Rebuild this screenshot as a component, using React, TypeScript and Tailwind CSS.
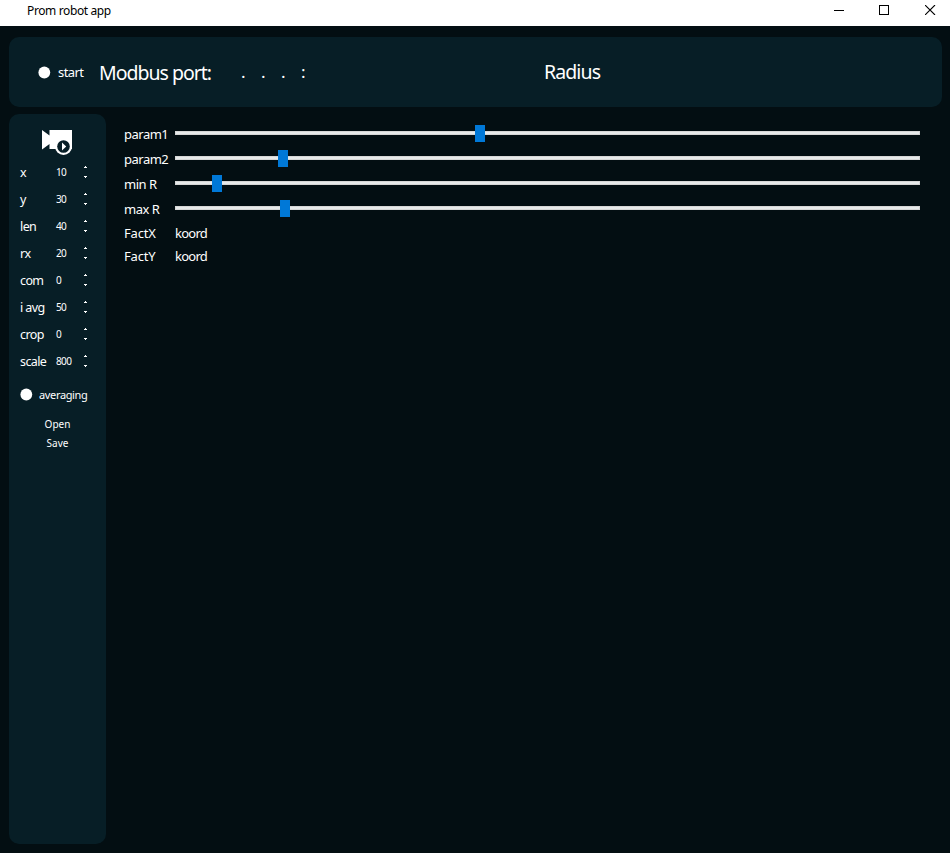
const SETTINGS = [
  { label: 'x', value: '10' },
  { label: 'y', value: '30' },
  { label: 'len', value: '40' },
  { label: 'rx', value: '20' },
  { label: 'com', value: '0' },
  { label: 'i avg', value: '50' },
  { label: 'crop', value: '0' },
  { label: 'scale', value: '800' },
];

const SLIDERS = [
  { label: 'param1', offset: 300 },
  { label: 'param2', offset: 103 },
  { label: 'min R', offset: 37 },
  { label: 'max R', offset: 105 },
];

function TitleBar() {
  return (
    <header className="flex h-[26px] items-start justify-between bg-white text-black">
      <h1 className="pl-[27px] text-[12px] leading-[22px] tracking-[-0.38px]">Prom robot app</h1>
      <div className="flex gap-[35px] pr-[14px] pt-[5px]">
        <svg width="10" height="11" shapeRendering="crispEdges" aria-label="Minimize">
          <path d="M0 5.5h10" stroke="#000" />
        </svg>
        <svg width="10" height="10" shapeRendering="crispEdges" aria-label="Maximize">
          <path d="M.5 .5h9v9h-9z" fill="none" stroke="#000" />
        </svg>
        <svg className="ml-px" width="11" height="10" aria-label="Close">
          <path d="M0 0l10 10M10 0L0 10" stroke="#000" strokeWidth="1.1" />
        </svg>
      </div>
    </header>
  );
}

function Radio({ className }: { className: string }) {
  return (
    <svg className={`shrink-0 ${className}`} width="13" height="13">
      <circle cx="6.3" cy="6.5" r="5.9" fill="#fff" />
    </svg>
  );
}

function ConnectionBar() {
  return (
    <section className="flex h-[70px] rounded-[10px] bg-[#071e26] pl-[29px]">
      <Radio className="mt-[29px]" />
      <span className="mt-[25px] ml-[7px] w-[41px] text-[13px] leading-[20px] tracking-[-0.6px]">start</span>
      <span className="mt-[21px] w-[142px] text-[19.5px] leading-[30px] tracking-[-1px] whitespace-nowrap">
        Modbus port:
      </span>
      <div className="mt-[25px] flex text-[17px] leading-[20px]">
        <span className="w-[20px]">.</span>
        <span className="w-[20px]">.</span>
        <span className="w-[20px]">.</span>
        <span className="w-[243px]">:</span>
      </div>
      <span className="mt-[20px] text-[19.5px] leading-[30px] tracking-[-0.9px]">Radius</span>
    </section>
  );
}

function CameraIcon() {
  return (
    <svg className="ml-[33px] mt-[16px]" width="31" height="26" viewBox="0 0 31 26">
      <path d="M0 0L7.5 5.5V0H30V19H7.5V14L0 19.5Z" fill="#fff" />
      <circle cx="21.5" cy="16.5" r="8.4" fill="#fff" />
      <circle cx="21.5" cy="16.5" r="6.3" fill="#071e26" />
      <path d="M20 12.5L24.2 16.5L20 20.5Z" fill="#fff" />
    </svg>
  );
}

function Stepper() {
  return (
    <svg width="3" height="12" shapeRendering="crispEdges" fill="#fff">
      <path d="M1 0h1v1h1v1h-3v-1h1zM0 10h3v1h-1v1h-1v-1h-1z" />
    </svg>
  );
}

function Sidebar() {
  return (
    <aside className="h-[730px] w-[97px] rounded-[10px] bg-[#071e26]">
      <div className="h-[45px] overflow-hidden">
        <CameraIcon />
      </div>
      {SETTINGS.map((s) => (
        <div key={s.label} className="flex h-[27px] items-start pl-[11px]">
          <span className="mt-[4px] w-[36px] text-[12.5px] leading-[20px] tracking-[-0.6px] whitespace-nowrap">{s.label}</span>
          <span className="mt-[4px] w-[28px] text-[10px] leading-[19px] tracking-[-0.6px]">{s.value}</span>
          <span className="mt-[7px] block">
            <Stepper />
          </span>
        </div>
      ))}
      <div className="mt-[9px] flex h-[26px] pl-[11px]">
        <Radio className="mt-[4px]" />
        <span className="mt-[1px] ml-[6px] text-[11px] leading-[20px] tracking-[-0.35px]">averaging</span>
      </div>
      <div className="mt-[5px] flex flex-col items-center text-[10px] leading-[19px]">
        <span>Open</span>
        <span>Save</span>
      </div>
    </aside>
  );
}

function Controls() {
  return (
    <main className="pl-[18px] pt-[7px] text-[13px]">
      {SLIDERS.map((s) => (
        <div key={s.label} className="flex h-[25px]">
          <span className="mt-[3px] w-[51px] leading-[20px] tracking-[-0.5px] whitespace-nowrap">{s.label}</span>
          <div className="relative mt-[10px] h-[4px] w-[745px] border border-[#d6d6d6] bg-[#e7eaea]">
            <span className="absolute top-[-7px] h-[17px] w-[10px] bg-[#0078d7]" style={{ left: s.offset - 1 }} />
          </div>
        </div>
      ))}
      {['FactX', 'FactY'].map((label) => (
        <div key={label} className="flex h-[23px]">
          <span className="mt-[2px] w-[51px] leading-[20px] tracking-[-0.2px]">{label}</span>
          <span className="mt-[2px] leading-[20px] tracking-[-0.75px]">koord</span>
        </div>
      ))}
    </main>
  );
}

export default function App() {
  return (
    <div className="h-[853px] w-[950px] overflow-hidden bg-[#030e12] font-['Noto_Sans',sans-serif] text-white">
      <TitleBar />
      <div className="px-[9px] pt-[11px] pr-[8px]">
        <ConnectionBar />
        <div className="mt-[7px] flex">
          <Sidebar />
          <Controls />
        </div>
      </div>
    </div>
  );
}
